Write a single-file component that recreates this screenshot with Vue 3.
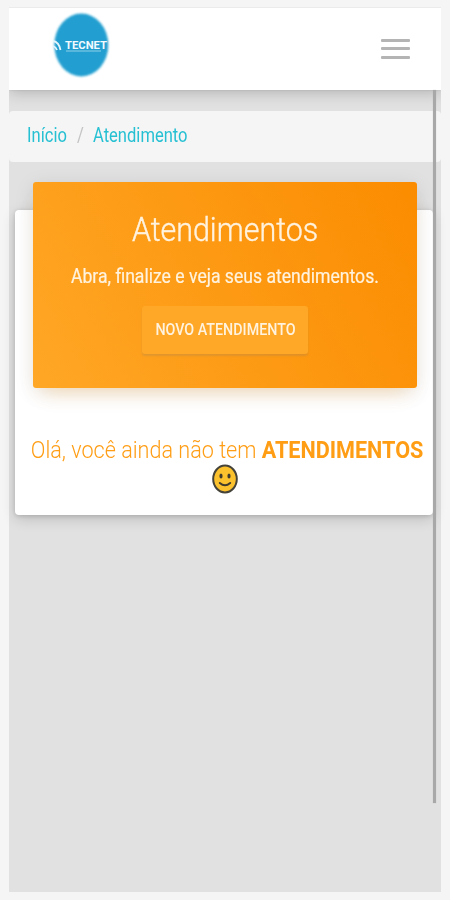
<template>
  <div class="screen">
    <header class="navbar">
      <svg class="logo" width="60" height="68" viewBox="0 0 60 68">
        <defs>
          <filter id="soft" x="-10%" y="-10%" width="120%" height="120%">
            <feGaussianBlur stdDeviation="1" />
          </filter>
        </defs>
        <ellipse cx="30.3" cy="34" rx="27" ry="31.5" fill="#229fd0" filter="url(#soft)" />
        <path d="M2 30 Q8 31 9.5 39 M2 35 Q5 36 6 39" fill="none" stroke="#e4f6fc" stroke-width="1.8" />
        <text class="logo-text" x="14" y="37.5" textLength="42" lengthAdjust="spacingAndGlyphs">TECNET</text>
        <path d="M15 40 H50" stroke="#8fd0e9" stroke-width="1" />
      </svg>
      <button class="toggler" aria-label="Menu">
        <span v-for="n in 3" :key="n" class="toggler-bar"></span>
      </button>
    </header>

    <main class="content">
      <div class="scrollbar"></div>
      <nav class="breadcrumb">
        <a class="crumb home">Início</a>
        <span class="slash">/</span>
        <a class="crumb current">Atendimento</a>
      </nav>

      <section class="card">
        <div class="card-header">
          <h4 class="title"><span>Atendimentos</span></h4>
          <p class="subtitle"><span>Abra, finalize e veja seus atendimentos.</span></p>
          <button class="btn" @click="abrirAtendimento"><span>NOVO ATENDIMENTO</span></button>
        </div>
        <div class="card-body">
          <p v-if="!atendimentos.length" class="empty">
            <span>Olá, você ainda não tem <b>ATENDIMENTOS</b></span>
          </p>
          <svg class="smile" width="28" height="32" viewBox="0 0 28 32">
            <ellipse cx="14" cy="16" rx="11.8" ry="13.4" fill="#fcc22d" stroke="#45423a" stroke-width="2" />
            <ellipse cx="10" cy="13" rx="1.6" ry="2.5" fill="#403b2c" />
            <ellipse cx="18" cy="13" rx="1.6" ry="2.5" fill="#403b2c" />
            <path d="M8.8 20 Q14 24.5 19.2 20" fill="none" stroke="#403b2c" stroke-width="2" stroke-linecap="round" />
          </svg>
        </div>
      </section>
    </main>
  </div>
</template>

<script setup>
import { ref } from 'vue'

const atendimentos = ref([])

const abrirAtendimento = () => {
  atendimentos.value.push({ id: Date.now() })
}
</script>

<style>
body {
  background: #f5f5f5;
}
</style>

<style scoped>
.screen {
  box-sizing: border-box;
  width: 450px;
  height: 900px;
  padding: 7px 9px 8px;
  background: #f5f5f5;
  font-family: Roboto, "Liberation Sans", sans-serif;
  display: flex;
  flex-direction: column;
  overflow: hidden;
}

.navbar {
  box-sizing: border-box;
  height: 83px;
  flex-shrink: 0;
  padding: 0 31px 0 42px;
  display: flex;
  align-items: center;
  justify-content: space-between;
  background: #fff;
  border-top: 1px solid #ebebeb;
  box-shadow: 0 3px 14px rgba(0, 0, 0, 0.2), 0 0 2px rgba(0, 0, 0, 0.12);
  /* keeps the shadow below the bar only */
  clip-path: inset(0 0 -24px 0);
  position: relative;
  z-index: 1;
}

.logo {
  margin-bottom: 8px;
}

.logo-text {
  font: 700 11.5px Roboto, sans-serif;
  fill: #f0faff;
}

.toggler {
  width: 29px;
  padding: 0;
  border: none;
  background: none;
  display: flex;
  flex-direction: column;
  gap: 5.5px;
  margin-bottom: 1px;
}

.toggler-bar {
  height: 3px;
  border-radius: 1px;
  background: #b4b4b4;
}

.content {
  position: relative;
  flex: 1;
  background: #e1e1e1;
  padding-top: 21px;
}

.scrollbar {
  position: absolute;
  top: 0;
  right: 5px;
  z-index: 3;
  width: 3px;
  height: 713px;
  background: #a8a8a8;
  box-shadow: 0 0 1px #a8a8a8;
}

.breadcrumb {
  height: 51px;
  padding-left: 18px;
  border-radius: 4px;
  background: #f5f5f5;
  display: flex;
  align-items: center;
  font-size: 20px;
  line-height: 49px;
  white-space: nowrap;
}

.crumb {
  color: #26c0d3;
}

.crumb,
.slash {
  display: block;
  height: 51px;
  transform: scaleX(0.828);
  transform-origin: left;
}

.home {
  width: 50px;
}

.slash {
  width: 16px;
  color: #c4c4c4;
}

.card {
  box-sizing: border-box;
  width: 418px;
  height: 305px;
  margin: 48px 0 0 6px;
  padding: 0 16px 0 18px;
  border-radius: 4px;
  background: #fff;
  box-shadow: 0 4px 14px rgba(0, 0, 0, 0.16), 0 1px 4px rgba(0, 0, 0, 0.14);
}

.card-header {
  box-sizing: border-box;
  position: relative;
  top: -28px;
  height: 206px;
  padding-top: 27px;
  border-radius: 3px;
  background: linear-gradient(60deg, #ffa726, #fb8c00);
  box-shadow: 0 12px 20px -10px rgba(255, 152, 0, 0.28), 0 4px 20px rgba(0, 0, 0, 0.1);
  color: #fff3df;
  text-align: center;
  white-space: nowrap;
}

.title,
.subtitle,
.empty {
  margin: 0;
}

.title span,
.subtitle span,
.btn span,
.empty span {
  display: inline-block;
}

.title {
  font-size: 34px;
  font-weight: 300;
  line-height: 40px;
  -webkit-text-stroke: 0.4px #fff3df;
}

.subtitle {
  margin-top: 14px;
  font-size: 20px;
  line-height: 26px;
  -webkit-text-stroke: 0.2px #fff3df;
}

.btn {
  width: 166px;
  height: 48px;
  margin-top: 17px;
  padding: 0 0 2px;
  border: none;
  border-radius: 3px;
  background: #ffa726;
  box-shadow: 0 2px 2px rgba(160, 130, 90, 0.3);
  color: #fff3df;
  font: 500 16px Roboto, sans-serif;
}

.title span {
  transform: scaleX(0.895);
}

.subtitle span {
  transform: scaleX(0.88);
}

.btn span {
  margin: 0 -20px;
  transform: scaleX(0.893);
}

.card-body {
  display: flex;
  flex-direction: column;
  align-items: center;
  margin-top: 19px;
}

.empty {
  padding-left: 4px;
  color: #ff9d14;
  font-size: 24px;
  font-weight: 300;
  line-height: 30px;
  white-space: nowrap;
}

.empty span {
  transform: scaleX(0.9);
}

.empty b {
  font-weight: 700;
}

.smile {
  margin-top: -2px;
}
</style>
